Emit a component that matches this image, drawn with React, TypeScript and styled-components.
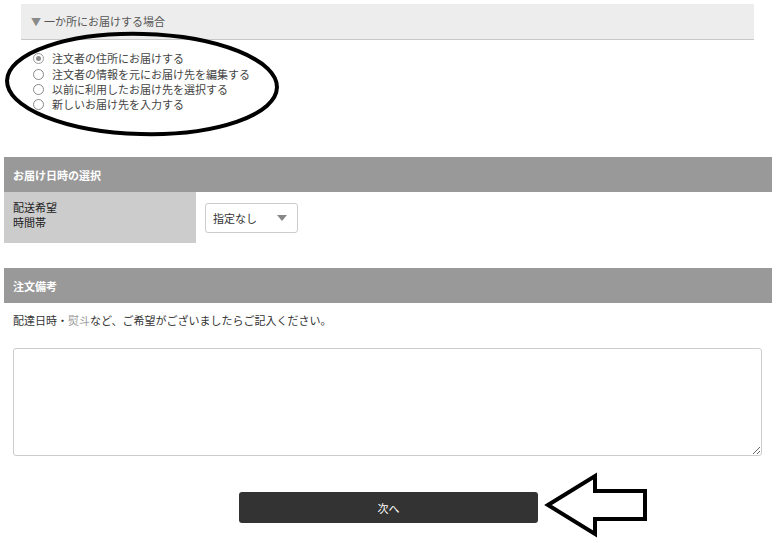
import React from "react";
import styled, { createGlobalStyle } from "styled-components";

const GlobalStyle = createGlobalStyle`
  html, body { margin: 0; padding: 0; background: #fff; }
  body {
    font-family: "Noto Sans CJK JP", "Noto Sans", sans-serif;
    font-size: 11px;
    color: #333;
  }
`;

const Page = styled.div`
  position: relative;
  width: 768px;
  padding: 4px 0 0 4px;
  height: 539px;
`;

const TopBox = styled.div`
  margin: 0 18px 0 17px;
  height: 35px;
  background: #ededed;
  border-bottom: 1px solid #c8c8c8;
  display: flex;
  align-items: center;
  padding-left: 10px;
  color: #555;
  font-size: 11px;
  line-height: 1;
`;

const Tri = styled.span`
  color: #8a8a8a;
  font-size: 10px;
  margin-right: 3px;
`;

const RadioList = styled.div`
  display: flex;
  flex-direction: column;
  padding: 11px 0 0 29px;
  height: 101px;
  box-sizing: border-box;
`;

const RadioRow = styled.label`
  display: flex;
  align-items: center;
  height: 15.4px;
  color: #444;
  font-size: 11px;
  line-height: 1;
`;

const RadioDot = styled.span<{ $checked?: boolean }>`
  width: 9px;
  height: 9px;
  border-radius: 50%;
  border: 1px solid ${(p) => (p.$checked ? "#9a9a9a" : "#8a8a8a")};
  background: #fff;
  margin-right: 8px;
  position: relative;
  flex: none;
  &::after {
    content: "";
    display: ${(p) => (p.$checked ? "block" : "none")};
    position: absolute;
    left: 2px;
    top: 2px;
    width: 5px;
    height: 5px;
    border-radius: 50%;
    background: #8c8c8c;
  }
`;

const Section = styled.section<{ $top: number }>`
  margin-top: ${(p) => p.$top}px;
`;

const SectionHead = styled.div`
  height: 35px;
  background: #999;
  color: #fff;
  font-weight: bold;
  font-size: 11px;
  display: flex;
  align-items: center;
  padding-left: 9px;
`;

const Row = styled.div`
  display: flex;
  align-items: stretch;
  height: 51px;
`;

const LabelCell = styled.div`
  width: 192px;
  background: #ccc;
  color: #222;
  font-size: 11px;
  line-height: 15px;
  padding: 8px 0 0 9px;
  box-sizing: border-box;
`;

const ValueCell = styled.div`
  flex: 1;
  display: flex;
  align-items: center;
  padding-left: 9px;
`;

const SelectBox = styled.div`
  width: 93px;
  height: 30px;
  box-sizing: border-box;
  border: 1px solid #ccc;
  border-radius: 3px;
  display: flex;
  align-items: center;
  justify-content: space-between;
  padding: 0 10px 0 7px;
  color: #333;
  font-size: 11px;
`;

const Caret = styled.span`
  width: 0;
  height: 0;
  border-left: 5px solid transparent;
  border-right: 5px solid transparent;
  border-top: 6px solid #888;
  margin-top: 1px;
`;

const Note = styled.p`
  margin: 0;
  padding: 10px 0 0 9px;
  height: 45px;
  box-sizing: border-box;
  color: #333;
  font-size: 11px;
  line-height: 14px;
`;

const Light = styled.span`
  color: #999;
`;

const TextArea = styled.textarea`
  display: block;
  margin-left: 9px;
  width: 749px;
  height: 108px;
  box-sizing: border-box;
  border: 1px solid #ccc;
  border-radius: 3px;
  resize: both;
  font-family: inherit;
`;

const ButtonRow = styled.div`
  display: flex;
  justify-content: center;
  padding-top: 36px;
`;

const NextButton = styled.button`
  width: 299px;
  height: 31px;
  background: #333;
  color: #fff;
  border: none;
  border-radius: 3px;
  font-family: inherit;
  font-size: 11px;
  margin-left: 1px;
`;

const Ellipse = styled.svg`
  position: absolute;
  left: 0;
  top: 28px;
  pointer-events: none;
`;

const Arrow = styled.svg`
  position: absolute;
  left: 540px;
  top: 469px;
  pointer-events: none;
`;

const options = [
  "注文者の住所にお届けする",
  "注文者の情報を元にお届け先を編集する",
  "以前に利用したお届け先を選択する",
  "新しいお届け先を入力する",
];

export default function App() {
  return (
    <>
      <GlobalStyle />
      <Page>
        <TopBox>
          <Tri>▼</Tri>一か所にお届けする場合
        </TopBox>
        <RadioList>
          {options.map((o, i) => (
            <RadioRow key={o}>
              <RadioDot $checked={i === 0} />
              {o}
            </RadioRow>
          ))}
        </RadioList>
        <Section $top={16}>
          <SectionHead>お届け日時の選択</SectionHead>
          <Row>
            <LabelCell>
              配送希望
              <br />
              時間帯
            </LabelCell>
            <ValueCell>
              <SelectBox>
                指定なし
                <Caret />
              </SelectBox>
            </ValueCell>
          </Row>
        </Section>
        <Section $top={25}>
          <SectionHead>注文備考</SectionHead>
          <Note>
            配達日時・<Light>熨斗</Light>など、ご希望がございましたらご記入ください。
          </Note>
          <TextArea />
        </Section>
        <ButtonRow>
          <NextButton>次へ</NextButton>
        </ButtonRow>
        <Ellipse width="290" height="115" viewBox="0 0 290 115">
          <ellipse
            cx="142"
            cy="56"
            rx="135"
            ry="50"
            fill="none"
            stroke="#000"
            strokeWidth="4"
            transform="rotate(1.5 142 56)"
          />
        </Ellipse>
        <Arrow width="110" height="70" viewBox="0 0 110 70">
          <path
            d="M8 36 L55 7 L55 22 L105 22 L105 50 L55 50 L55 65 Z"
            fill="#fff"
            stroke="#000"
            strokeWidth="4"
            strokeLinejoin="miter"
          />
        </Arrow>
      </Page>
    </>
  );
}
